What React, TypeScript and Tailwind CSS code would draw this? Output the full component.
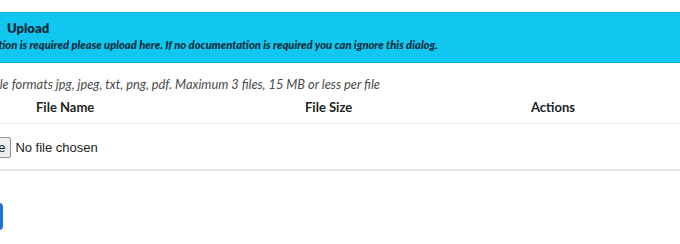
import React from "react";

export default function App() {
  return (
    <div className="w-[680px] h-[244px] overflow-hidden bg-white relative">
      <div className="ml-[-70px] w-[820px]">
        {/* banner */}
        <div className="mt-[12px] h-[51px] bg-[#12c7ef] border-t border-b border-[#0bb0d6] pt-[8px]">
          <div className="pl-[77px] text-[13px] leading-[15px] font-extrabold text-[#0c2c3c]" style={{ fontFamily: "Lato, 'Liberation Sans', sans-serif" }}>
            Upload
          </div>
          <div className="ml-[6px] mt-[3px] text-[11.2px] leading-[12px] font-black italic text-[#0c2c3c] whitespace-nowrap" style={{ fontFamily: "Lato, 'Liberation Sans', sans-serif" }}>
            If documentation is required please upload here. If no documentation is required you can ignore this dialog.
          </div>
        </div>
        {/* info */}
        <div className="ml-[8px] mt-[13px] text-[12.8px] leading-[16px] italic text-[#4a4a4a] whitespace-nowrap" style={{ fontFamily: "Lato, 'Liberation Sans', sans-serif" }}>
          Allowable file formats jpg, jpeg, txt, png, pdf. Maximum 3 files, 15 MB or less per file
        </div>
        {/* table header */}
        <div className="mt-[1px] flex h-[31px] items-center border-b border-[#ececec] text-[13px] font-bold text-[#222]" style={{ fontFamily: "Lato, 'Liberation Sans', sans-serif" }}>
          <div className="w-[375px] pl-[106px]">File Name</div>
          <div className="w-[226px]">File Size</div>
          <div>Actions</div>
        </div>
        {/* row */}
        <div className="flex h-[47px] items-center border-b-2 border-[#e6e6e6] pt-[2px]">
          <div className="flex items-center gap-[4px] text-[13px] text-[#222]" style={{ fontFamily: "'Liberation Sans', Arial, sans-serif" }}>
            <span className="h-[21px] px-[5px] flex items-center border border-[#8f8f8f] rounded-[2px] bg-[#efefef]">Choose File</span>
            <span>No file chosen</span>
          </div>
        </div>
        {/* button */}
        <div className="mt-[32px] pl-[12px]">
          <button className="h-[27px] w-[61px] rounded-[4px] bg-[#1f6fe0] text-white text-[13px]" style={{ fontFamily: "'Liberation Sans', Arial, sans-serif" }}>
            Save
          </button>
        </div>
      </div>
    </div>
  );
}
